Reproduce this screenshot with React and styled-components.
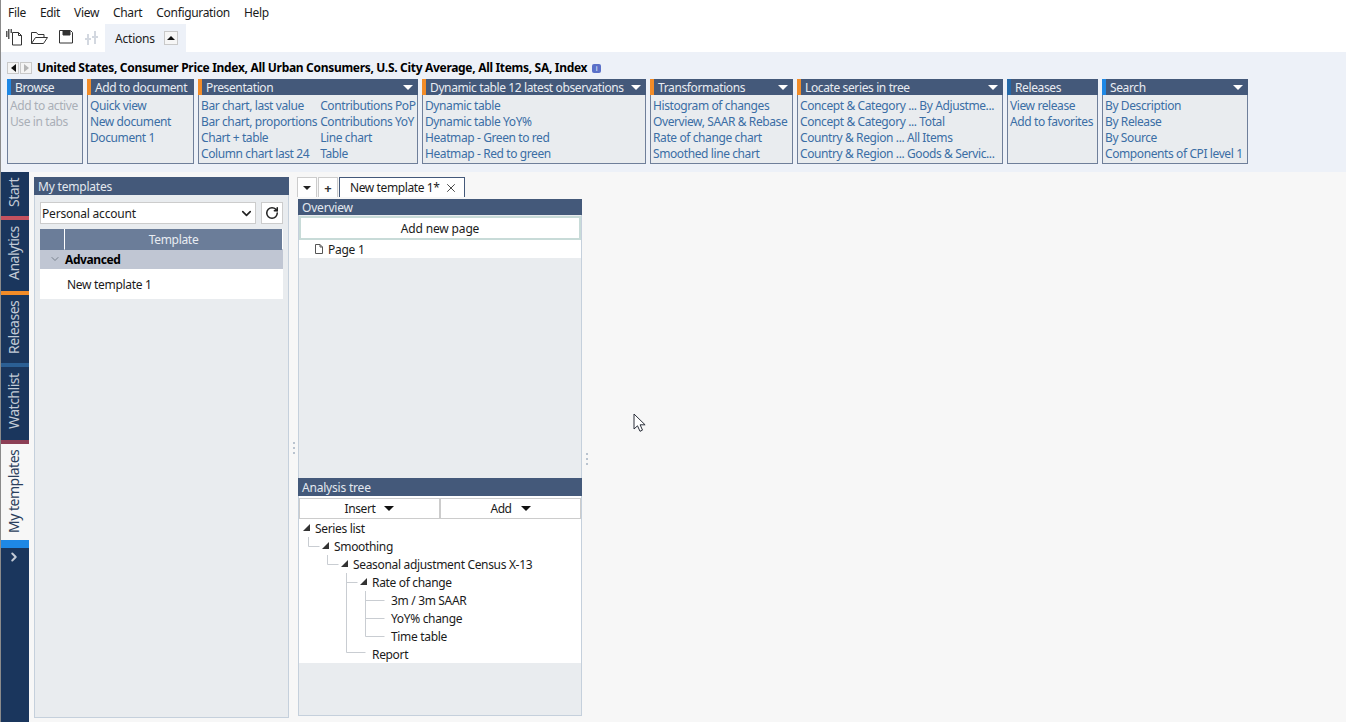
import React from 'react'
import styled, { createGlobalStyle } from 'styled-components'
import { ChevronDown, ChevronRight, RotateCw, X } from 'lucide-react'

const GlobalStyle = createGlobalStyle`
  html, body, #root {
    margin: 0;
    height: 100%;
  }
  body {
    font-family: "Noto Sans", "Open Sans", sans-serif;
    font-size: 12px;
    color: #1b1b1b;
    background: #f7f7f7;
    overflow: hidden;
  }
`

const Page = styled.div`
  position: relative;
  display: flex;
  flex-direction: column;
  height: 722px;
  border-left: 1px solid #8b8b8b;
  background: #fff;
`

// top menu
const MenuBar = styled.div`
  display: flex;
  height: 24px;
  align-items: center;
  gap: 14px;
  padding-left: 7px;
  letter-spacing: -0.33px;
`

const ToolBar = styled.div`
  display: flex;
  height: 28px;
  align-items: center;
  padding-left: 3px;
`

const ToolIcon = styled.svg`
  width: 18px;
  height: 18px;
  margin-right: ${p => p.$gap}px;
  fill: none;
  stroke: ${p => p.$muted ? '#d3d8e0' : '#333'};
  stroke-width: 1;
`

const ActionsTab = styled.div`
  display: flex;
  align-items: center;
  gap: 9px;
  height: 28px;
  width: 81px;
  box-sizing: border-box;
  padding-left: 10px;
  margin-left: 1px;
  background: #edf1f8;
  letter-spacing: -0.2px;
`

const CollapseBox = styled.span`
  display: flex;
  align-items: center;
  justify-content: center;
  width: 12px;
  height: 12px;
  border: 1px solid #c9c9c9;
  background: #f6f6f6;
`

const Triangle = styled.span`
  width: 0;
  height: 0;
  border-left: ${p => p.$size}px solid transparent;
  border-right: ${p => p.$size}px solid transparent;
  ${p => p.$up ? 'border-bottom' : 'border-top'}: ${p => p.$size}px solid ${p => p.$color};
`

// ribbon
const Ribbon = styled.div`
  height: 120px;
  box-sizing: border-box;
  padding: 8px 0 0 6px;
  background: #edf1f8;
`

const TitleRow = styled.div`
  display: flex;
  align-items: center;
  height: 15px;
  margin-bottom: 4px;
`

const NavButton = styled.span`
  display: flex;
  align-items: center;
  justify-content: center;
  width: 10px;
  height: 10px;
  margin-right: 1px;
  border: 1px solid #c9c9c9;
  background: #f4f4f4;
`

const NavArrow = styled.span`
  width: 0;
  height: 0;
  border-top: 4px solid transparent;
  border-bottom: 4px solid transparent;
  ${p => p.$left ? 'border-right' : 'border-left'}: 5px solid ${p => p.$off ? '#b5b5b5' : '#111'};
`

const Title = styled.div`
  margin-left: 4px;
  font-weight: 700;
  font-size: 12px;
  letter-spacing: -0.31px;
  color: #000;
  white-space: nowrap;
`

const InfoBadge = styled.span`
  display: flex;
  align-items: center;
  justify-content: center;
  width: 9px;
  height: 9px;
  margin: 1px 0 0 5px;
  border-radius: 2px;
  background: #5a70c8;
  color: #fff;
  font-size: 7px;
  line-height: 9px;
`

const Groups = styled.div`
  display: flex;
  gap: 4px;
`

const Group = styled.div`
  width: ${p => p.$width}px;
  height: 85px;
  box-sizing: border-box;
  border: 1px solid #6f7f9a;
  border-top: 0;
  background: #e9ecef;
`

const GroupHead = styled.div`
  display: flex;
  align-items: center;
  justify-content: space-between;
  height: 16px;
  margin: 0 -1px;
  padding: 1px 5px 0 4px;
  box-sizing: border-box;
  background: #44597a;
  border-left: 4px solid ${p => p.$accent};
  color: #e8ecf2;
  letter-spacing: -0.38px;
  white-space: nowrap;
`

const GroupBody = styled.div`
  display: flex;
  gap: ${p => p.$gap || 0}px;
  padding: 3px 0 0 2px;
`

const LinkColumn = styled.div`
  display: flex;
  flex-direction: column;
`

const Action = styled.div`
  height: 16px;
  line-height: 16px;
  color: ${p => p.$off ? '#a9afb7' : '#3b6ea5'};
  letter-spacing: -0.4px;
  white-space: nowrap;
`

// main area
const Main = styled.div`
  flex: 1;
  display: flex;
  min-height: 0;
  background: #f7f7f7;
`

const Rail = styled.div`
  display: flex;
  flex-direction: column;
  width: 28px;
  background: #1a365d;
`

const RailTab = styled.div`
  display: flex;
  align-items: center;
  justify-content: flex-end;
  height: ${p => p.$height}px;
  box-sizing: border-box;
  padding: 0 0 6px 4px;
  writing-mode: vertical-rl;
  transform: rotate(180deg);
  background: ${p => p.$active ? '#f7f7f7' : '#1a365d'};
  color: ${p => p.$active ? '#2b3f5c' : '#c3cbd6'};
  font-size: 14px;
  letter-spacing: -0.5px;
`

const RailStripe = styled.div`
  height: ${p => p.$height || 4}px;
  background: ${p => p.$color};
`

const RailMore = styled.div`
  display: flex;
  justify-content: center;
  padding: 2px 2px 0 0;
  color: #c3cbd6;
`

const Panels = styled.div`
  display: flex;
  padding: 5px 0 4px 5px;
`

const TemplatesPanel = styled.div`
  width: 255px;
  box-sizing: border-box;
  background: #e9ecef;
  border-right: 1px solid #c5d0dc;
  border-left: 1px solid #c5d0dc;
  border-bottom: 1px solid #c5d0dc;
`

const PanelHead = styled.div`
  height: ${p => p.$height || 18}px;
  padding-left: 4px;
  margin: 0 -1px;
  background: #44597a;
  color: #e3e8ef;
  line-height: ${p => (p.$height || 18) + 1}px;
  letter-spacing: -0.2px;
`

const AccountRow = styled.div`
  display: flex;
  gap: 5px;
  padding: 7px 5px 5px;
`

const AccountSelect = styled.div`
  flex: 1;
  display: flex;
  align-items: center;
  justify-content: space-between;
  height: 22px;
  box-sizing: border-box;
  padding: 0 1px;
  background: #fff;
  border: 1px solid #ccc;
  letter-spacing: -0.2px;
`

const IconButton = styled.div`
  display: flex;
  align-items: center;
  justify-content: center;
  width: 22px;
  height: 22px;
  box-sizing: border-box;
  background: #fff;
  border: 1px solid #ccc;
`

const TemplateTable = styled.div`
  margin: 0 5px;
`

const TableHead = styled.div`
  display: grid;
  grid-template-columns: 24px 1fr;
  gap: 1px;
  height: 20px;
  background: #fff;
  border-right: 1px solid #fff;
`

const HeadCell = styled.div`
  background: #6b7d99;
  color: #e8ecf2;
  text-align: center;
  line-height: 21px;
  letter-spacing: -0.3px;
`

const TableGroup = styled.div`
  display: flex;
  align-items: center;
  gap: 4px;
  height: 20px;
  padding-left: 9px;
  background: #c0c6d3;
  font-weight: 700;
  color: #000;
  letter-spacing: -0.4px;
`

const TableRow = styled.div`
  height: 30px;
  padding-left: 27px;
  background: #fff;
  line-height: 32px;
  letter-spacing: -0.3px;
`

const Grip = styled.div`
  display: flex;
  flex-direction: column;
  justify-content: center;
  align-items: center;
  gap: 3px;
  width: 9px;
  padding-top: ${p => p.$offset}px;
`

const GripDot = styled.span`
  width: 2px;
  height: 2px;
  background: #b9c3cf;
`

const EditorColumn = styled.div`
  display: flex;
  flex-direction: column;
  width: 284px;
`

const TabRow = styled.div`
  display: flex;
  height: 20px;
  margin: 0 0 2px -1px;
`

const SmallTab = styled.div`
  display: flex;
  align-items: center;
  justify-content: center;
  width: 20px;
  box-sizing: border-box;
  margin-right: 1px;
  background: #fff;
  border: 1px solid #ccc;
  border-bottom: 0;
  font-size: 13px;
  font-weight: 700;
  color: #333;
`

const DocTab = styled.div`
  display: flex;
  align-items: center;
  gap: 5px;
  width: 126px;
  box-sizing: border-box;
  padding-left: 10px;
  background: #fff;
  border: 1px solid #44597a;
  border-bottom: 0;
  letter-spacing: -0.4px;
`

const Pane = styled.div`
  display: flex;
  flex-direction: column;
  height: ${p => p.$height}px;
  box-sizing: border-box;
  background: #e9ecef;
  border: 1px solid #c5d0dc;
  border-width: ${p => p.$closed ? '0 1px 1px' : '0 1px'};
`

const AddPage = styled.div`
  height: 24px;
  margin-top: 1px;
  box-sizing: border-box;
  border: 2px solid #c8dbd8;
  background: #fff;
  text-align: center;
  line-height: 21px;
  letter-spacing: -0.15px;
`

const PageRow = styled.div`
  display: flex;
  align-items: center;
  gap: 5px;
  height: 18px;
  padding-left: 16px;
  background: #fff;
  letter-spacing: -0.25px;
`

const SplitRow = styled.div`
  display: grid;
  grid-template-columns: 141px 141px;
  padding-top: 2px;
  background: #fff;
`

const SplitButton = styled.div`
  display: flex;
  align-items: center;
  justify-content: center;
  gap: 9px;
  height: 21px;
  box-sizing: border-box;
  border: 1px solid #ccc;
  background: #fff;
  letter-spacing: -0.4px;
`

const Tree = styled.div`
  position: relative;
  background: #fff;
  height: 144px;
`

const TreeGuides = styled.svg`
  position: absolute;
  left: 0;
  top: 0;
  width: 282px;
  height: 144px;
  stroke: #c9cdd2;
  stroke-width: 1;
  fill: none;
`

const TreeRow = styled.div`
  display: flex;
  align-items: center;
  height: 18px;
  margin-left: ${p => p.$depth * 19 + 16}px;
  position: relative;
  letter-spacing: -0.33px;
`

const TreeToggle = styled.span`
  position: absolute;
  left: -12px;
  top: 5px;
  width: 0;
  height: 0;
  border-bottom: 7px solid #333;
  border-left: 7px solid transparent;
`

const Pointer = styled.svg`
  position: absolute;
  left: 632px;
  top: 413px;
  width: 14px;
  height: 20px;
`

const groups = [
  { title: 'Browse', width: 76, accent: '#1e88e5', columns: [['Add to active', 'Use in tabs']], off: true },
  { title: 'Add to document', width: 107, accent: '#f28c28', columns: [['Quick view', 'New document', 'Document 1']] },
  {
    title: 'Presentation', width: 220, accent: '#f28c28', menu: true, gap: 3,
    columns: [
      ['Bar chart, last value', 'Bar chart, proportions', 'Chart + table', 'Column chart last 24'],
      ['Contributions PoP', 'Contributions YoY', 'Line chart', 'Table']
    ]
  },
  {
    title: 'Dynamic table 12 latest observations', width: 224, accent: '#f28c28', menu: true,
    columns: [['Dynamic table', 'Dynamic table YoY%', 'Heatmap - Green to red', 'Heatmap - Red to green']]
  },
  {
    title: 'Transformations', width: 143, accent: '#f28c28', menu: true,
    columns: [['Histogram of changes', 'Overview, SAAR & Rebase', 'Rate of change chart', 'Smoothed line chart']]
  },
  {
    title: 'Locate series in tree', width: 206, accent: '#f28c28', menu: true,
    columns: [[
      'Concept & Category ... By Adjustme...',
      'Concept & Category ... Total',
      'Country & Region ... All Items',
      'Country & Region ... Goods & Servic...'
    ]]
  },
  { title: 'Releases', width: 91, accent: '#2468a8', columns: [['View release', 'Add to favorites']] },
  {
    title: 'Search', width: 146, accent: '#1e88e5', menu: true,
    columns: [['By Description', 'By Release', 'By Source', 'Components of CPI level 1']]
  }
]

const railTabs = [
  { label: 'Start', height: 44, stripe: '#c4525f' },
  { label: 'Analytics', height: 71, stripe: '#f28c28' },
  { label: 'Releases', height: 68, stripe: '#2b5f94' },
  { label: 'Watchlist', height: 73, stripe: '#8c3f55' },
  { label: 'My templates', height: 96, stripe: '#1e88e5', active: true, stripeHeight: 8 }
]

const treeItems = [
  { label: 'Series list', depth: 0, open: true },
  { label: 'Smoothing', depth: 1, open: true },
  { label: 'Seasonal adjustment Census X-13', depth: 2, open: true },
  { label: 'Rate of change', depth: 3, open: true },
  { label: '3m / 3m SAAR', depth: 4 },
  { label: 'YoY% change', depth: 4 },
  { label: 'Time table', depth: 4 },
  { label: 'Report', depth: 3 }
]

const menuItems = ['File', 'Edit', 'View', 'Chart', 'Configuration', 'Help']

const App = () => (
  <Page>
    <GlobalStyle />
    <MenuBar>
      {menuItems.map(item => <span key={item}>{item}</span>)}
    </MenuBar>

    <ToolBar>
      <ToolIcon viewBox='0 0 18 18' $gap={8}>
        <path d='M8.500 3.500h6l3 3v9.500h-9z M14.500 3.500v3h3' />
        <path d='M4 1h1.500M6.500 1h1.500M2 3h1.500M4 3h1.500M6.500 3h1.500M2 5h1.500M4 5h1.500M2 7h1.500M4 7h1.500M4 9h1.500' stroke='#222' strokeWidth='1.4' />
      </ToolIcon>
      <ToolIcon viewBox='0 0 18 18' $gap={9}>
        <path d='M1.500 14.500v-11h5l1.500 2h6v3 M1.500 14.500h12l4-6h-12z' />
      </ToolIcon>
      <ToolIcon viewBox='0 0 18 18' $gap={8}>
        <path d='M2.500 1.500h11l2 2v10.500h-13z' />
        <path d='M6 2h7v4h-7z' fill='#333' />
      </ToolIcon>
      <ToolIcon viewBox='0 0 18 18' $gap={3} $muted>
        <path d='M5 5v11M12 2v13M2 10h6M9 8h6' strokeWidth='2' />
      </ToolIcon>
      <ActionsTab>
        Actions
        <CollapseBox><Triangle $up $size={4} $color='#111' /></CollapseBox>
      </ActionsTab>
    </ToolBar>

    <Ribbon>
      <TitleRow>
        <NavButton><NavArrow $left /></NavButton>
        <NavButton><NavArrow $off /></NavButton>
        <Title>United States, Consumer Price Index, All Urban Consumers, U.S. City Average, All Items, SA, Index</Title>
        <InfoBadge>i</InfoBadge>
      </TitleRow>
      <Groups>
        {groups.map(group => (
          <Group key={group.title} $width={group.width}>
            <GroupHead $accent={group.accent}>
              {group.title}
              {group.menu && <Triangle $size={5} $color='#fff' />}
            </GroupHead>
            <GroupBody $gap={group.gap}>
              {group.columns.map((links, i) => (
                <LinkColumn key={i}>
                  {links.map(link => <Action key={link} $off={group.off}>{link}</Action>)}
                </LinkColumn>
              ))}
            </GroupBody>
          </Group>
        ))}
      </Groups>
    </Ribbon>

    <Main>
      <Rail>
        {railTabs.map(tab => (
          <React.Fragment key={tab.label}>
            <RailTab $height={tab.height} $active={tab.active}>{tab.label}</RailTab>
            <RailStripe $color={tab.stripe} $height={tab.stripeHeight} />
          </React.Fragment>
        ))}
        <RailMore><ChevronRight size={14} strokeWidth={3.4} /></RailMore>
      </Rail>

      <Panels>
        <TemplatesPanel>
          <PanelHead>My templates</PanelHead>
          <AccountRow>
            <AccountSelect>
              Personal account
              <ChevronDown size={15} strokeWidth={2.6} color='#222' />
            </AccountSelect>
            <IconButton><RotateCw size={14} strokeWidth={2.6} color='#222' /></IconButton>
          </AccountRow>
          <TemplateTable>
            <TableHead>
              <HeadCell />
              <HeadCell>Template</HeadCell>
            </TableHead>
            <TableGroup>
              <ChevronDown size={12} color='#77808c' />
              Advanced
            </TableGroup>
            <TableRow>New template 1</TableRow>
          </TemplateTable>
        </TemplatesPanel>

        <Grip $offset={0}>
          <GripDot /><GripDot /><GripDot />
        </Grip>

        <EditorColumn>
          <TabRow>
            <SmallTab><Triangle $size={4} $color='#222' /></SmallTab>
            <SmallTab>+</SmallTab>
            <DocTab>
              New template 1*
              <X size={14} strokeWidth={1.4} color='#222' />
            </DocTab>
          </TabRow>

          <Pane $height={279}>
            <PanelHead $height={16}>Overview</PanelHead>
            <AddPage>Add new page</AddPage>
            <PageRow>
              <svg width='8' height='10' viewBox='0 0 8 10' fill='none' stroke='#555'>
                <path d='M.5.5h4.500l2.500 2.500v6.500h-7z M5 .5v2.500h2.500' />
              </svg>
              Page 1
            </PageRow>
          </Pane>

          <Pane $height={238} $closed>
            <PanelHead>Analysis tree</PanelHead>
            <SplitRow>
              <SplitButton>Insert <Triangle $size={5} $color='#111' /></SplitButton>
              <SplitButton>Add <Triangle $size={5} $color='#111' /></SplitButton>
            </SplitRow>
            <Tree>
              <TreeGuides viewBox='0 0 282 144'>
                <path d='M9.500 18v9.500h11 M28.500 36v9.500h11 M47.500 54v79.500h19 M47.500 63.500h11 M66.500 72v45.500h19 M66.500 81.500h19 M66.500 99.500h19' />
              </TreeGuides>
              {treeItems.map(item => (
                <TreeRow key={item.label} $depth={item.depth}>
                  {item.open && <TreeToggle />}
                  {item.label}
                </TreeRow>
              ))}
            </Tree>
          </Pane>
        </EditorColumn>

        <Grip $offset={22}>
          <GripDot /><GripDot /><GripDot />
        </Grip>
      </Panels>
    </Main>

    <Pointer viewBox='0 0 14 20'>
      <path d='M1 1v15l3.500-3.200 2.500 5.500 2.500-1.200-2.400-5.300h5z' fill='#fff' stroke='#2a2f3a' strokeWidth='1' />
    </Pointer>
  </Page>
)

export default App
